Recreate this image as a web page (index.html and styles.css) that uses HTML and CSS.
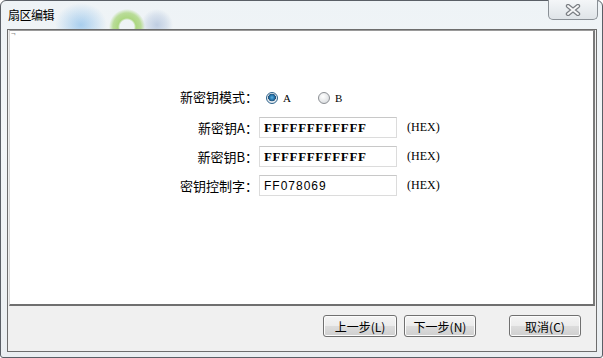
FILE: index.html
```html
<!DOCTYPE html>
<html lang="zh-CN">
<head>
    <meta charset="UTF-8">
    <title>扇区编辑</title>
    <link rel="stylesheet" href="styles.css">
</head>
<body>
    <div class="window">
        <div class="titlebar">
            <span class="title">扇区编辑</span>
            <button class="close" title="关闭">
                <svg width="16" height="12" viewBox="0 0 16 12">
                    <path d="M3 2 L13 10 M13 2 L3 10" stroke="#7a7e83" stroke-width="4.4" stroke-linecap="round"/>
                    <path d="M3 2 L13 10 M13 2 L3 10" stroke="#f6f7f8" stroke-width="2" stroke-linecap="round"/>
                </svg>
            </button>
        </div>

        <div class="client">
            <div class="panel">
                <span class="mark">¬</span>
                <div class="form">
                    <label class="lbl">新密钥模式：</label>
                    <div class="radios">
                        <span class="radio checked"></span><span class="opt">A</span>
                        <span class="radio"></span><span class="opt">B</span>
                    </div>

                    <label class="lbl">新密钥A：</label>
                    <input class="field" value="FFFFFFFFFFFF">
                    <span class="hex">(HEX)</span>

                    <label class="lbl">新密钥B：</label>
                    <input class="field" value="FFFFFFFFFFFF">
                    <span class="hex">(HEX)</span>

                    <label class="lbl">密钥控制字：</label>
                    <input class="field thin" value="FF078069">
                    <span class="hex">(HEX)</span>
                </div>
            </div>

            <div class="footer">
                <button class="btn">上一步(L)</button>
                <button class="btn narrow">下一步(N)</button>
                <button class="btn narrow cancel">取消(C)</button>
            </div>
        </div>
    </div>
</body>
</html>
```

FILE: styles.css
```css
html, body {
    margin: 0;
    padding: 0;
}
body {
    font-family: "Noto Sans CJK SC", "Liberation Sans", sans-serif;
    font-size: 13px;
    color: #000;
    background: #fff;
}
.window {
    width: 603px;
    height: 358px;
    box-sizing: border-box;
    border: 1px solid #5a5f66;
    border-radius: 6px 6px 3px 3px;
    display: flex;
    flex-direction: column;
    background:
        radial-gradient(ellipse 26px 22px at 80px 24px, rgba(110,175,230,0.55), rgba(110,175,230,0) 100%),
        radial-gradient(circle at 126px 26px, rgba(255,255,255,0) 7px, rgba(150,205,90,0.75) 9px, rgba(150,205,90,0.6) 14px, rgba(150,205,90,0) 18px),
        radial-gradient(circle at 156px 24px, rgba(165,185,215,0.65) 0, rgba(165,185,215,0.3) 10px, rgba(165,185,215,0) 16px),
        linear-gradient(to bottom, #eef3f6 0, #f3f6f8 40%, #eaeef1 100%);
}
.titlebar {
    height: 28px;
    display: flex;
    justify-content: space-between;
    align-items: flex-start;
}
.title {
    font-size: 12px;
    margin: 5px 0 0 7px;
    letter-spacing: -0.5px;
    color: #000;
}
.close {
    width: 50px;
    height: 20px;
    margin-right: 4px;
    margin-top: -1px;
    border: 1px solid #8a9096;
    border-top: none;
    border-radius: 0 0 5px 5px;
    background: linear-gradient(to bottom, #f4f6f8 0, #e9edf0 50%, #dfe4e8 100%);
    display: flex;
    align-items: center;
    justify-content: center;
    padding: 0;
}
.client {
    flex: 1;
    margin: 0 5px 5px 6px;
    border: 1px solid #6d6d6d;
    background: #f0f0f0;
    display: flex;
    flex-direction: column;
}
.panel {
    position: relative;
    height: 276px;
    box-sizing: border-box;
    background: #fff;
    border-top: 1px solid #9a9a9a;
    border-left: 1px solid #d8d8d8;
    border-right: 2px solid #7a7a7a;
    border-bottom: 2px solid #6f6f6f;
    margin: 0 1px 0 1px;
    padding-top: 56px;
}
.mark {
    position: absolute;
    left: 1px;
    top: -4px;
    font-size: 8px;
    color: #888;
}
.form {
    display: grid;
    grid-template-columns: 90px 138px auto;
    column-gap: 0;
    row-gap: 8px;
    align-items: center;
    margin-left: 159px;
}
.lbl {
    text-align: right;
    height: 20px;
    line-height: 20px;
    margin-right: 1px;
}
.form .lbl:first-child {
    margin-bottom: 2px;
}
.radios {
    grid-column: 2 / 4;
    display: flex;
    align-items: center;
    padding-left: 7px;
    font-family: "Liberation Serif", serif;
    font-size: 11px;
}
.radio {
    width: 12px;
    height: 12px;
    border-radius: 50%;
    border: 1px solid #8c8f94;
    background: radial-gradient(circle at 40% 35%, #ffffff 0, #e4e6e8 60%, #cfd2d5 100%);
    box-sizing: border-box;
}
.radio.checked {
    border-color: #2c628b;
    background: radial-gradient(circle at 50% 45%, #5ab0e0 0, #1f6ea6 35%, #2a4f70 50%, #e8eef3 55%, #dfe5ea 100%);
}
.opt {
    margin-left: 5px;
    margin-right: 27px;
}
.field {
    width: 138px;
    height: 21px;
    box-sizing: border-box;
    border: 1px solid #dcdcdc;
    border-top-color: #c8c8c8;
    padding: 0 4px;
    font-family: "Liberation Serif", serif;
    font-size: 13px;
    font-weight: bold;
    letter-spacing: 0.6px;
    outline: none;
    color: #000;
}
.field.thin {
    font-family: "Liberation Sans", sans-serif;
    font-weight: normal;
    font-size: 12px;
    letter-spacing: 1px;
}
.hex {
    margin-left: 10px;
    font-family: "Liberation Serif", serif;
    font-size: 12px;
}
.footer {
    flex: 1;
    display: flex;
    align-items: flex-start;
    padding-top: 9px;
    padding-left: 315px;
}
.btn {
    width: 74px;
    height: 22px;
    border: 1px solid #707070;
    border-radius: 3px;
    background: linear-gradient(to bottom, #f4f4f4 0, #ececec 48%, #dcdcdc 52%, #cfcfcf 100%);
    box-shadow: inset 0 0 0 1px #fcfcfc;
    font-family: "Noto Sans CJK SC", sans-serif;
    font-size: 12px;
    padding: 0;
    margin-right: 7px;
    color: #000;
}
.btn.narrow {
    width: 72px;
}
.btn.cancel {
    margin-left: 26px;
}
```
